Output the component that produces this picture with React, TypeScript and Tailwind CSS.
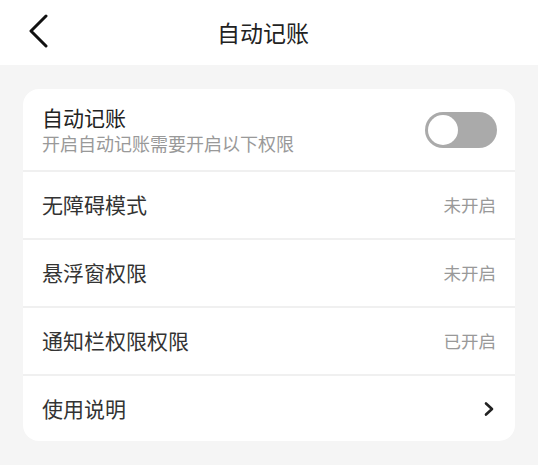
import React from "react";

const font = { fontFamily: '"Noto Sans CJK SC", "Noto Sans", sans-serif' };

function Row({ label, value, last }: { label: string; value?: string; last?: boolean }) {
  return (
    <div className={`flex items-center justify-between pl-[19px] pr-[19px] ${last ? "h-[65px]" : "h-[68px] border-b-2 border-[#f0f0f0]"}`}>
      <span className="text-[21px] text-[#333]">{label}</span>
      {value ? (
        <span className="text-[17.5px] text-[#999]">{value}</span>
      ) : (
        <svg width="12" height="16" viewBox="0 0 12 16" className="mr-[1px]">
          <path d="M3 2.5l6 5.5-6 5.5" fill="none" stroke="#222" strokeWidth="2.6" strokeLinecap="round" strokeLinejoin="round" />
        </svg>
      )}
    </div>
  );
}

export default function App() {
  return (
    <div className="w-[538px] h-[465px] bg-[#f5f5f5] overflow-hidden" style={font}>
      <div className="relative h-[65px] bg-white flex items-center justify-center">
        <svg width="24" height="34" viewBox="0 0 24 34" className="absolute left-[27px] top-[14px]">
          <path d="M19 2L4 17l15 15" fill="none" stroke="#111" strokeWidth="3" strokeLinecap="round" strokeLinejoin="round" />
        </svg>
        <span className="text-[23px] text-[#222] mr-[12px]">自动记账</span>
      </div>
      <div className="mx-[23px] mt-[24px] w-[492px] bg-white rounded-[16px]">
        <div className="flex items-center justify-between h-[83px] pl-[19px] pr-[18px] border-b-2 border-[#f0f0f0]">
          <div className="flex flex-col">
            <span className="text-[21px] leading-[27px] text-[#222]">自动记账</span>
            <span className="text-[18px] leading-[24px] text-[#999]">开启自动记账需要开启以下权限</span>
          </div>
          <div className="w-[72px] h-[36px] rounded-full bg-[#aaaaaa] p-[3px] flex items-center">
            <div className="w-[30px] h-[30px] rounded-full bg-white" />
          </div>
        </div>
        <Row label="无障碍模式" value="未开启" />
        <Row label="悬浮窗权限" value="未开启" />
        <Row label="通知栏权限权限" value="已开启" />
        <Row label="使用说明" last />
      </div>
    </div>
  );
}
